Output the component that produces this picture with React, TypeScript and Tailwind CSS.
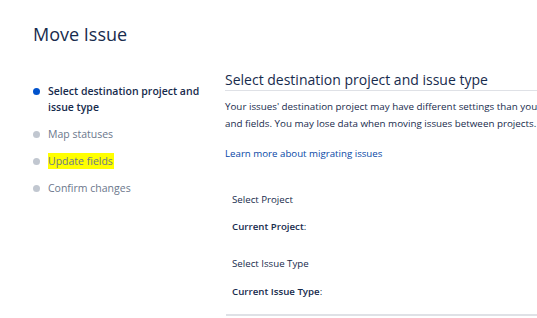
const steps = [
  { label: "Select destination project and issue type", active: true },
  { label: "Map statuses" },
  { label: "Update fields", highlight: true },
  { label: "Confirm changes" },
];

const StepList = () => {
  return (
    <ul className="w-[192px] shrink-0 pt-[13px] pr-4 flex flex-col gap-[11px]">
      {steps.map((step) => (
        <li key={step.label} className="flex flex-row items-start gap-[8px]">
          <span
            className={`mt-[5px] h-[7px] w-[7px] shrink-0 rounded-full ${
              step.active ? "bg-[#0052cc]" : "bg-[#c1c7d0]"
            }`}
          />
          <span
            className={`text-[10.5px] leading-[16px] ${
              step.active ? "font-semibold text-[#172b4d]" : "text-[#6b778c]"
            } ${step.highlight ? "bg-[#ffff00] pr-[1px]" : ""}`}
          >
            {step.label}
          </span>
        </li>
      ))}
    </ul>
  );
};

const App = () => {
  return (
    <div
      className="w-[537px] h-[318px] overflow-hidden bg-white pl-[33px] pt-[22px]"
      style={{ fontFamily: '"Open Sans", "Noto Sans", sans-serif' }}
    >
      <h1 className="text-[18px] leading-[24px] font-medium text-[#172b4d]">
        Move Issue
      </h1>
      <div className="mt-[24px] flex flex-row">
        <StepList />
        <div className="w-[340px] shrink-0">
          <h2 className="border-b border-[#dfe1e6] text-[14px] leading-[20px] text-[#172b4d] whitespace-nowrap">
            Select destination project and issue type
          </h2>
          <p className="mt-[7px] text-[9.8px] leading-[17px] text-[#172b4d] whitespace-nowrap">
            Your issues' destination project may have different settings than your current project
            <br />
            and fields. You may lose data when moving issues between projects.
          </p>
          <a className="mt-[13px] block text-[9.7px] leading-[17px] text-[#0747a6]">
            Learn more about migrating issues
          </a>
          <div className="mt-[29px] pl-[7px] text-[9.7px] leading-[17px] text-[#172b4d]">
            <p>Select Project</p>
            <p className="mt-[10px]">
              <strong className="font-semibold">Current Project</strong>:
            </p>
            <p className="mt-[20px]">Select Issue Type</p>
            <p className="mt-[11px]">
              <strong className="font-semibold">Current Issue Type</strong>:
            </p>
          </div>
          <div className="mt-[14px] ml-[1px] h-[2px] bg-[#dfe1e6]" />
        </div>
      </div>
    </div>
  );
};

export default App;
